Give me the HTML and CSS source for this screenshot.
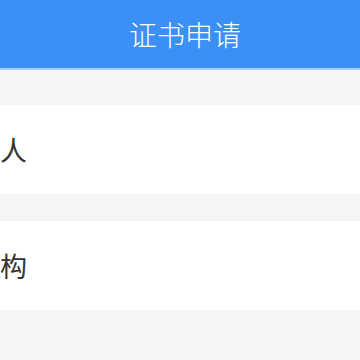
FILE: index.html
```html
<!DOCTYPE html>
<html lang="zh-CN">
<head>
    <meta charset="UTF-8">
    <meta name="viewport" content="width=device-width, initial-scale=1.0">
    <title>证书申请</title>
    <link rel="stylesheet" href="styles.css">
</head>
<body>

    <div class="header">
        <h1>证书申请</h1>
    </div>

    <div class="apply-list">
        <div class="apply-item">
            <span class="apply-label">个人</span>
        </div>
        <div class="apply-item">
            <span class="apply-label">机构</span>
        </div>
    </div>

</body>
</html>
```

FILE: styles.css
```css
body {
    margin: 0;
    font-family: "Noto Sans CJK SC", "Noto Sans", sans-serif;
    background-color: #f5f5f5;
    overflow: hidden;
}

.header {
    height: 68px;
    background-color: #3c8ff5;
    border-bottom: 2px solid #a9cbf7;
    display: flex;
    align-items: center;
    justify-content: center;
    padding-left: 10px;
}

.header h1 {
    margin: 0;
    font-size: 28px;
    font-weight: 300;
    color: #fff;
    line-height: 1;
}

.apply-list {
    padding-top: 35px;
}

.apply-item {
    height: 89px;
    margin-bottom: 27px;
    background-color: #fff;
    display: flex;
    align-items: center;
}

.apply-label {
    margin-left: -27px;
    font-size: 27px;
    color: #333;
}
```
